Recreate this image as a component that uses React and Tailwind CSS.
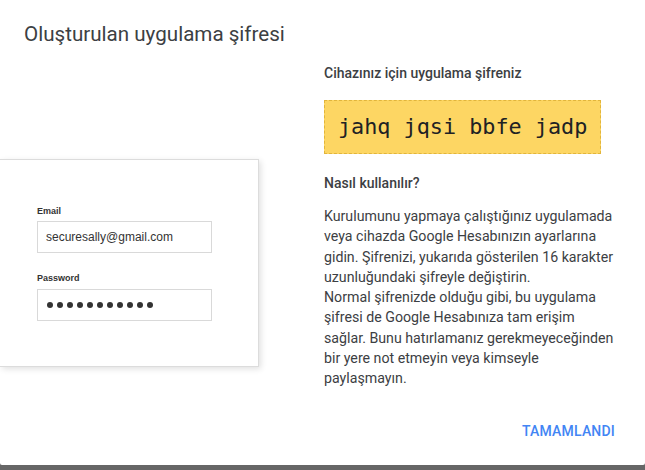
import React from "react";

const lines = [
  "Kurulumunu yapmaya çalıştığınız uygulamada",
  "veya cihazda Google Hesabınızın ayarlarına",
  "gidin. Şifrenizi, yukarıda gösterilen 16 karakter",
  "uzunluğundaki şifreyle değiştirin.",
  "Normal şifrenizde olduğu gibi, bu uygulama",
  "şifresi de Google Hesabınıza tam erişim",
  "sağlar. Bunu hatırlamanız gerekmeyeceğinden",
  "bir yere not etmeyin veya kimseyle",
  "paylaşmayın.",
];

const LoginCard = () => (
  <div
    className="mt-[113px] w-[259px] h-[208px] bg-white border border-l-0 border-[#dcdcdc] shadow-[2px_2px_6px_rgba(0,0,0,0.12)] pl-[37px] pt-[45px]"
    style={{ fontFamily: '"Liberation Sans", Arial, sans-serif' }}
  >
    <div className="text-[9px] font-bold text-[#333] leading-[12px]">Email</div>
    <div className="mt-[4px] w-[175px] h-[32px] border border-[#d9d9d9] flex items-center pl-[8px] text-[12px] text-[#333]">
      securesally@gmail.com
    </div>
    <div className="mt-[19px] text-[9px] font-bold text-[#333] leading-[12px]">Password</div>
    <div className="mt-[5px] w-[175px] h-[32px] border border-[#d9d9d9] flex items-center pl-[9px] gap-[4px]">
      {Array.from({ length: 11 }).map((_, i) => (
        <span key={i} className="w-[6px] h-[6px] rounded-full bg-[#333]" />
      ))}
    </div>
  </div>
);

export default function App() {
  return (
    <div className="h-[470px] w-[645px] bg-[#666] overflow-hidden">
      <div
        className="h-[465px] bg-white rounded-b-[2px] flex flex-col"
        style={{ fontFamily: 'Roboto, "Noto Sans", sans-serif' }}
      >
        <h1 className="pt-[22px] pl-6 text-[20.6px] leading-6 text-[#3c4043]">
          Oluşturulan uygulama şifresi
        </h1>
        <div className="flex">
          <div className="w-[324px] shrink-0">
            <LoginCard />
          </div>
          <div className="w-[310px]">
            <div className="mt-[17px] text-[14px] leading-5 font-medium text-[#3c4043]">
              Cihazınız için uygulama şifreniz
            </div>
            <div className="mt-[17px] w-[277px] h-[54px] bg-[#fdd663] border border-dashed border-[#e2b53b] flex items-center pl-[13px]">
              <span
                className="text-[21.8px] text-[#202124]"
                style={{ fontFamily: '"DejaVu Sans Mono", monospace' }}
              >
                jahq jqsi bbfe jadp
              </span>
            </div>
            <div className="mt-[19px] text-[14px] leading-5 font-medium text-[#3c4043]">
              Nasıl kullanılır?
            </div>
            <div className="mt-[13px] text-[14.2px] leading-[20.25px] text-[#3c4043]">
              {lines.map((l, i) => (
                <div key={i} className="whitespace-nowrap">{l}</div>
              ))}
            </div>
          </div>
        </div>
        <div className="flex justify-end pr-[30px] mt-[33px]">
          <button className="text-[14px] leading-5 font-medium text-[#4285f4] tracking-[0.2px]">
            TAMAMLANDI
          </button>
        </div>
      </div>
    </div>
  );
}
